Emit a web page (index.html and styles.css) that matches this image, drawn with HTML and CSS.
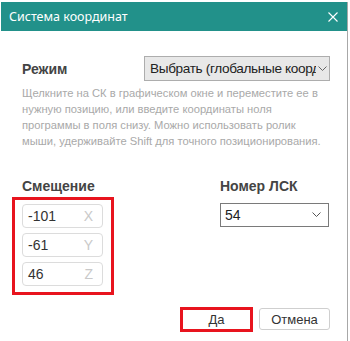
FILE: index.html
```html
<!DOCTYPE html>
<html lang="ru">
<head>
    <meta charset="UTF-8">
    <meta name="viewport" content="width=device-width, initial-scale=1.0">
    <title>Система координат</title>
    <link rel="stylesheet" href="styles.css">
</head>
<body>
    <div class="dialog">
        <div class="titlebar">
            <span class="title">Система координат</span>
            <svg class="close" width="10" height="10" viewBox="0 0 10 10">
                <path d="M0.5 0.5 L9.5 9.5 M9.5 0.5 L0.5 9.5" stroke="#fff" stroke-width="1.1" fill="none"/>
            </svg>
        </div>

        <div class="content">
            <div class="mode-row">
                <span class="label">Режим</span>
                <div class="dropdown mode-select">
                    <span class="dropdown-text">Выбрать (глобальные координаты)</span>
                    <svg class="chevron" width="9" height="6" viewBox="0 0 9 6">
                        <path d="M0.5 0.5 L4.5 4.5 L8.5 0.5" stroke="#666" stroke-width="1" fill="none"/>
                    </svg>
                </div>
            </div>

            <p class="hint">Щелкните на СК в графическом окне и переместите ее в нужную позицию, или введите координаты ноля программы в поля снизу. Можно использовать ролик мыши, удерживайте Shift для точного позиционирования.</p>

            <div class="columns">
                <div class="col-offset">
                    <div class="label">Смещение</div>
                    <div class="coords">
                        <div class="coord"><span>-101</span><span class="axis">X</span></div>
                        <div class="coord"><span>-61</span><span class="axis">Y</span></div>
                        <div class="coord"><span>46</span><span class="axis">Z</span></div>
                    </div>
                </div>
                <div class="col-lcs">
                    <div class="label">Номер ЛСК</div>
                    <div class="dropdown lcs-select">
                        <span class="dropdown-text">54</span>
                        <svg class="chevron" width="9" height="6" viewBox="0 0 9 6">
                            <path d="M0.5 0.5 L4.5 4.5 L8.5 0.5" stroke="#555" stroke-width="1" fill="none"/>
                        </svg>
                    </div>
                </div>
            </div>

            <div class="buttons">
                <div class="btn-mark"><button class="btn">Да</button></div>
                <button class="btn">Отмена</button>
            </div>
        </div>
    </div>
</body>
</html>
```

FILE: styles.css
```css
body {
    margin: 0;
    background-color: white;
    font-family: "Liberation Sans", Arial, sans-serif;
}

.dialog {
    width: 346px;
    height: 339px;
    margin: 2px 0 0 1px;
    border-right: 1px solid #a8a8a8;
    background-color: white;
}

.titlebar {
    height: 29px;
    background-color: #22918a;
    display: flex;
    align-items: center;
    justify-content: space-between;
    padding: 0 9px 0 8px;
}

.title {
    color: white;
    font-family: "Noto Sans", "Open Sans", sans-serif;
    font-size: 12.5px;
}

.close {
    display: block;
}

.content {
    padding: 25px 17px 0 21px;
}

.label {
    font-size: 14px;
    font-weight: bold;
    color: #444;
}

.mode-row {
    display: flex;
    align-items: center;
    justify-content: space-between;
}

.dropdown {
    display: flex;
    align-items: center;
    justify-content: space-between;
    box-sizing: border-box;
    font-size: 14px;
    color: #222;
}

.dropdown-text {
    white-space: nowrap;
    overflow: hidden;
    flex: 1;
}

.mode-select {
    width: 186px;
    height: 25px;
    background-color: #e8e8e8;
    border: 1px solid #adadad;
    padding: 0 2px 0 5px;
    font-size: 13.6px;
    letter-spacing: -0.35px;
}

.mode-select .chevron {
    margin-left: 2px;
}

.hint {
    width: 300px;
    margin: 4px 0 0;
    font-size: 11.2px;
    line-height: 16px;
    color: #a9a9a9;
}

.columns {
    display: flex;
    margin-top: 29px;
}

.col-offset {
    width: 198px;
}

.coords {
    width: 81px;
    margin: 3px 0 0 -10px;
    padding: 4px 8px 6px 7px;
    border: 3px solid #e8141e;
    display: flex;
    flex-direction: column;
    gap: 5px;
}

.coord {
    height: 24px;
    box-sizing: border-box;
    border: 1px solid #dcdcdc;
    border-radius: 4px;
    display: flex;
    align-items: center;
    justify-content: space-between;
    padding: 0 9px 0 5px;
    font-size: 14px;
    color: #333;
}

.axis {
    color: #c9c9c9;
}

.lcs-select {
    width: 109px;
    height: 24px;
    margin-top: 9px;
    border: 1px solid #7a7a7a;
    padding: 0 7px 0 4px;
}

.buttons {
    display: flex;
    justify-content: flex-end;
    align-items: center;
    gap: 6px;
    margin-top: 12px;
}

.btn-mark {
    border: 3px solid #e8141e;
    padding: 0;
}

.btn {
    width: 71px;
    height: 22px;
    box-sizing: border-box;
    background-color: white;
    border: 1px solid #cfcfcf;
    border-radius: 3px;
    font-family: "Liberation Sans", Arial, sans-serif;
    font-size: 13px;
    color: #333;
    padding: 0;
}

.btn-mark .btn {
    width: 67px;
    height: 18px;
    border: none;
}
```
